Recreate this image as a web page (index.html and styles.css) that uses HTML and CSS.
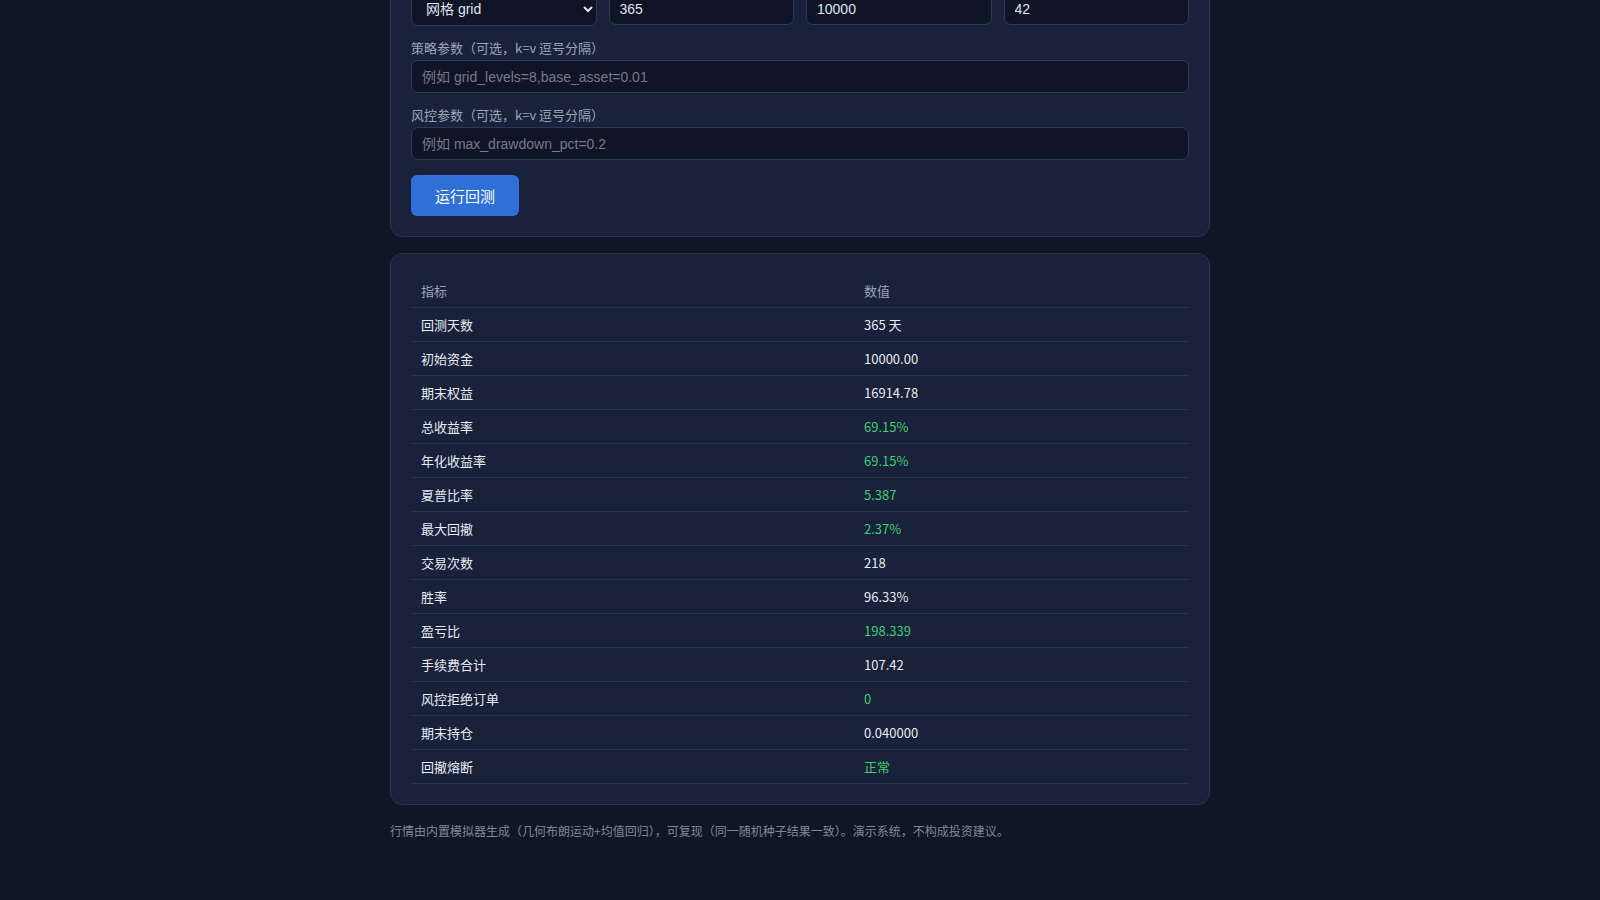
FILE: index.html
```html
<!DOCTYPE html>
<html lang="zh-CN">
<head>
<meta charset="utf-8">
<title>回测</title>
<link rel="stylesheet" href="styles.css">
</head>
<body>
<main class="page">
  <section class="card form-card">
    <div class="grid4">
      <label class="lbl">策略</label>
      <label class="lbl">回测天数</label>
      <label class="lbl">初始资金</label>
      <label class="lbl">随机种子</label>
      <select class="ctl sel"><option>网格 grid</option></select>
      <input class="ctl" value="365">
      <input class="ctl" value="10000">
      <input class="ctl" value="42">
    </div>
    <div class="field">
      <label class="lbl">策略参数（可选，k=v 逗号分隔）</label>
      <input class="ctl" placeholder="例如 grid_levels=8,base_asset=0.01">
    </div>
    <div class="field">
      <label class="lbl">风控参数（可选，k=v 逗号分隔）</label>
      <input class="ctl" placeholder="例如 max_drawdown_pct=0.2">
    </div>
    <button class="btn">运行回测</button>
  </section>

  <section class="card table-card">
    <table class="metrics">
      <thead>
        <tr><th class="c1">指标</th><th>数值</th></tr>
      </thead>
      <tbody>
        <tr><td>回测天数</td><td>365 天</td></tr>
        <tr><td>初始资金</td><td>10000.00</td></tr>
        <tr><td>期末权益</td><td>16914.78</td></tr>
        <tr><td>总收益率</td><td class="pos">69.15%</td></tr>
        <tr><td>年化收益率</td><td class="pos">69.15%</td></tr>
        <tr><td>夏普比率</td><td class="pos">5.387</td></tr>
        <tr><td>最大回撤</td><td class="pos">2.37%</td></tr>
        <tr><td>交易次数</td><td>218</td></tr>
        <tr><td>胜率</td><td>96.33%</td></tr>
        <tr><td>盈亏比</td><td class="pos">198.339</td></tr>
        <tr><td>手续费合计</td><td>107.42</td></tr>
        <tr><td>风控拒绝订单</td><td class="pos">0</td></tr>
        <tr><td>期末持仓</td><td>0.040000</td></tr>
        <tr><td>回撤熔断</td><td class="pos">正常</td></tr>
      </tbody>
    </table>
  </section>

  <p class="note">行情由内置模拟器生成（几何布朗运动+均值回归），可复现（同一随机种子结果一致）。演示系统，不构成投资建议。</p>
</main>
</body>
</html>
```

FILE: styles.css
```css
* { box-sizing: border-box; }

html, body {
  margin: 0;
  padding: 0;
  background: #0f1626;
  color: #e4e8f0;
  font-family: "Noto Sans CJK SC", "Noto Sans", sans-serif;
  overflow: hidden;
}

.page {
  width: 820px;
  margin: -50px auto 0;
}

.card {
  background: #19223a;
  border: 1px solid #27334f;
  border-radius: 12px;
  padding: 20px;
}

.grid4 {
  display: grid;
  grid-template-columns: repeat(4, 1fr);
  column-gap: 12px;
}

.lbl {
  display: block;
  font-size: 13px;
  line-height: 18px;
  color: #9ba5b8;
  margin-bottom: 3px;
}

.ctl {
  display: block;
  width: 100%;
  height: 33px;
  background: #0f1526;
  border: 1px solid #2b3a5a;
  border-radius: 7px;
  color: #dfe4ec;
  font-family: "Liberation Sans", "Noto Sans CJK SC", sans-serif;
  font-size: 14px;
  padding: 0 10px;
  outline: none;
}

.ctl::placeholder {
  color: #737b8a;
}

.sel {
  height: 34px;
  color-scheme: dark;
  padding: 0 8px 0 10px;
}

.field {
  margin-top: 13px;
}

.btn {
  display: block;
  margin-top: 15px;
  height: 41px;
  width: 108px;
  border: none;
  border-radius: 6px;
  background: #2f6fd8;
  color: #ffffff;
  font-family: "Noto Sans CJK SC", sans-serif;
  font-size: 15px;
}

.table-card {
  margin-top: 16px;
}

.metrics {
  width: 100%;
  border-collapse: collapse;
  font-size: 13px;
}

.metrics th,
.metrics td {
  height: 34px;
  padding: 0 10px;
  text-align: left;
  border-bottom: 1px solid #27334f;
  font-weight: normal;
}

.metrics th {
  height: 33px;
  color: #9ba5b8;
}

.metrics .c1 {
  width: 443px;
}

.metrics td {
  color: #e8ebf2;
}

.metrics td.pos {
  color: #3ecf6e;
}

.note {
  margin: 17px 0 0;
  font-size: 12px;
  line-height: 18px;
  color: #7f889a;
}
```
